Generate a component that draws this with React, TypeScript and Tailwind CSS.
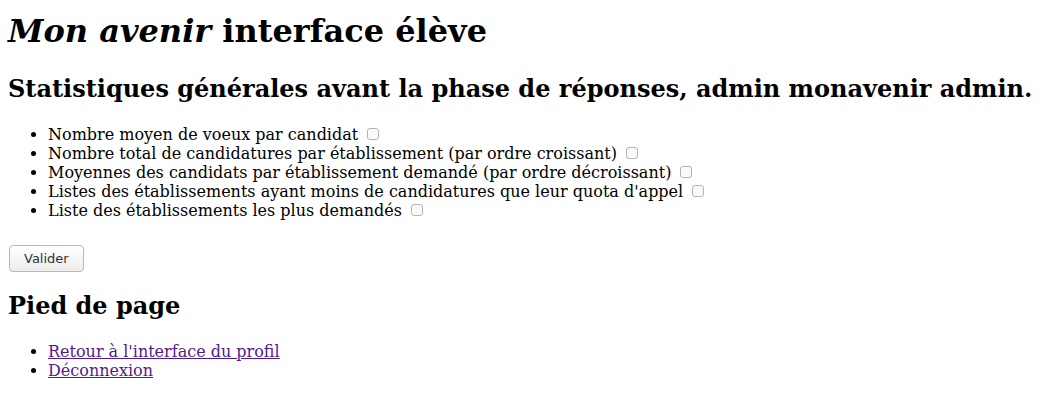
const options = [
  "Nombre moyen de voeux par candidat",
  "Nombre total de candidatures par établissement (par ordre croissant)",
  "Moyennes des candidats par établissement demandé (par ordre décroissant)",
  "Listes des établissements ayant moins de candidatures que leur quota d'appel",
  "Liste des établissements les plus demandés",
];

const App = () => {
  return (
    <div className="px-2 pt-[13px] text-black font-['DejaVu_Serif',serif] bg-white min-h-[406px]">
      <h1 className="text-[32px] font-bold leading-[1.164]">
        <em>Mon avenir</em> interface élève
      </h1>
      <h2 className="text-[24px] font-bold leading-[1.164] mt-[25px]">
        Statistiques générales avant la phase de réponses, admin monavenir admin.
      </h2>
      <form onSubmit={(e) => e.preventDefault()}>
        <ul className="list-disc pl-10 mt-[22px] mb-[25px] text-[16px] leading-[19px]">
          {options.map((label, i) => (
            <li key={i}>
              {label}{" "}
              <input
                type="checkbox"
                className="appearance-none align-baseline w-[12px] h-[12px] mt-[3px] mr-[3px] mb-0 ml-[4px] border border-[#b4b4b4] rounded-[3px] bg-[#fafafa]"
              />
            </li>
          ))}
        </ul>
        <button
          type="submit"
          className="ml-px h-[27px] px-[14px] text-[13px] text-[#333] font-['DejaVu_Sans',sans-serif] border border-[#b8b8b8] rounded-[4px] bg-gradient-to-b from-white to-[#ececec]"
        >
          Valider
        </button>
      </form>
      <h2 className="text-[24px] font-bold leading-[1.164] mt-[20px]">Pied de page</h2>
      <ul className="list-disc pl-10 mt-[22px] text-[16px] leading-[normal]">
        <li>
          <a href="#" className="underline text-[#551a8b]">Retour à l'interface du profil</a>
        </li>
        <li>
          <a href="#" className="underline text-[#551a8b]">Déconnexion</a>
        </li>
      </ul>
    </div>
  );
};

export default App;
